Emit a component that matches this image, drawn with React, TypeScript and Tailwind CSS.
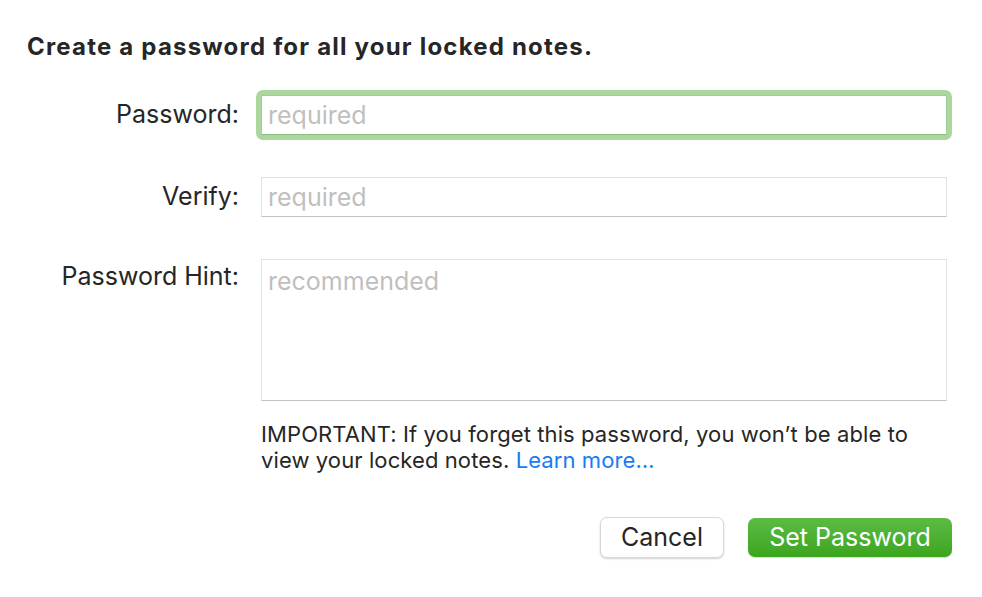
import { useState } from "react";

const font = { fontFamily: "Inter, 'Noto Sans', 'Liberation Sans', sans-serif" };

export default function App() {
  const [password, setPassword] = useState("");
  const [verify, setVerify] = useState("");
  const [hint, setHint] = useState("");

  return (
    <div className="min-h-[597px] w-[982px] bg-white text-[#262626]" style={font}>
      <div className="pl-[27px] pr-[35px] pt-[33px]">
        <h1 className="text-[24px] font-bold leading-[28px] tracking-[1.2px]">
          Create a password for all your locked notes.
        </h1>

        <div className="mt-[34px] grid grid-cols-[212px_1fr] gap-x-[22px]">
          <label className="flex h-[40px] items-center justify-end text-[25px]">Password:</label>
          <div className="-mx-[5px] -my-[5px] rounded-[7px] bg-[#abd69e] p-[5px]">
            <input
              className="block h-[40px] w-full border border-[#a0cf93] border-b-[#8cbf7f] bg-white px-[6px] text-[25px] outline-none placeholder:text-[#bfbfbf]"
              onChange={(event) => setPassword(event.target.value)}
              placeholder="required"
              type="password"
              value={password}
            />
          </div>

          <label className="mt-[42px] flex h-[40px] items-center justify-end text-[25px]">Verify:</label>
          <input
            className="mt-[42px] block h-[40px] w-full border border-[#e2e2e2] border-b-[#c4c4c4] bg-white px-[6px] text-[25px] outline-none placeholder:text-[#bfbfbf]"
            onChange={(event) => setVerify(event.target.value)}
            placeholder="required"
            type="password"
            value={verify}
          />

          <label className="mt-[42px] flex justify-end pt-[2px] text-[25px] leading-[30px]">Password Hint:</label>
          <textarea
            className="mt-[42px] block h-[142px] w-full resize-none border border-[#e2e2e2] border-b-[#c4c4c4] bg-white px-[6px] py-[6px] text-[25px] leading-[30px] outline-none placeholder:text-[#bfbfbf]"
            onChange={(event) => setHint(event.target.value)}
            placeholder="recommended"
            value={hint}
          />

          <div />
          <p className="mt-[20px] text-[22px] leading-[26px] tracking-[0.1px]">
            IMPORTANT: If you forget this password, you won’t be able to view your locked notes.{" "}
            <a className="text-[#147df5]" href="#">
              Learn more…
            </a>
          </p>
        </div>

        <div className="mt-[44px] flex justify-end gap-[24px]">
          <button
            className="h-[41px] w-[124px] rounded-[7px] border border-[#d8d8d8] bg-white text-[25px] text-[#262626] shadow-[0_1px_2px_rgba(0,0,0,0.18)]"
            type="button"
          >
            Cancel
          </button>
          <button
            className="-mr-[5px] mt-[1px] h-[39px] w-[204px] rounded-[7px] bg-gradient-to-b from-[#5cbb43] to-[#3ca51d] text-[25px] text-white shadow-[0_1px_1px_rgba(0,0,0,0.15)]"
            type="button"
          >
            Set Password
          </button>
        </div>
      </div>
    </div>
  );
}
